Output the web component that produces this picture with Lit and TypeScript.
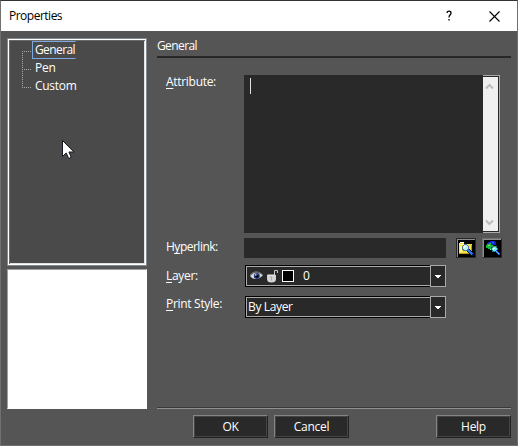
import { LitElement, html, css, svg } from "lit";
import { customElement } from "lit/decorators.js";

const folder = svg`
  <path fill="#f4e24a" d="M1 3h5v1h8v10H1z"/><path fill="#fff6a8" d="M1 4h5v1H1zM2 6h2v6H2z"/>
  <path fill="#b89a18" d="M1 13h12v1H1zM13 5h1v8h-1z"/>
  <path fill="#fff" d="M2 2h4v1H2z"/>
  <circle cx="7.5" cy="7.5" r="3" fill="#b8f4f4" stroke="#5a7890"/>
  <path fill="#fff" d="M6 6h2v1H7v1H6z"/>
  <path stroke="#08184c" stroke-width="3.4" d="M10 10l5 5"/><path stroke="#2878e8" stroke-width="1.8" d="M10 10l4.5 4.5"/>`;
const globe = svg`
  <path fill="#1028c8" d="M4 2h2V1h5v1h1v3h-2v3H6v1H4V8H3V3h1z"/>
  <path fill="#18b838" d="M3 4h2V3h2v2h2v2H7v2H4V8H2V5h1z"/>
  <path fill="#78e868" d="M4 5h2v1H4zM8 8h1v2H6V9h2z"/><path fill="#4068ff" d="M8 2h2v1H8z"/>
  <circle cx="10.5" cy="9" r="2.7" fill="#70e8e8" stroke="#287888"/>
  <path fill="#e8ffff" d="M9 8h2v1h-1v1H9z"/><path fill="#30c848" d="M10 6h2v1h-2z"/>
  <path stroke="#1058d8" stroke-width="2.4" d="M12 11l4 4"/><path stroke="#68c0ff" d="M12 11l3 3"/>`;

@customElement("app-root")
export class PropertiesDialog extends LitElement {
  static styles = css`
    :host { display: block; font: 12px/18px "Open Sans", "Noto Sans", sans-serif; color: #fff; }
    * { box-sizing: border-box; }
    svg { display: block; }
    u { text-underline-offset: 2px; text-decoration-thickness: 1px; text-decoration-skip-ink: none; }
    .window { width: 518px; height: 446px; background: #555; border: 1px solid #707070; border-top-color: #333; overflow: hidden; }
    .title { height: 30px; display: flex; align-items: center; background: #fff; color: #000; padding: 0 17px 0 8px; }
    .title span { flex: 1; letter-spacing: -.5px; }
    .title .help { margin-right: 36px; }
    .body { display: flex; gap: 10px; padding: 7px 6px 0; height: 378px; }
    .left { width: 140px; display: flex; flex-direction: column; gap: 3px; }
    .tree { height: 228px; background: #4a4a4a; border: 1px solid #808890; box-shadow: inset 0 0 0 1px #fff, inset 2px 2px 0 0 #696969, inset -2px -2px 0 0 #e3e3e3; padding: 2px; }
    .row { height: 18px; display: flex; }
    .row svg { flex: none; margin-left: 12px; }
    .row span { height: 18px; padding: 0 2px; border: 1px solid transparent; line-height: 15px; letter-spacing: -.28px; white-space: nowrap; }
    .row .active { width: 44px; border-color: #7da7e0; border-right-color: transparent; letter-spacing: -.6px; }
    .preview { height: 140px; background: #fff; border: 1px solid #fff; border-top-color: #a0a0a0; border-left-color: #a0a0a0; }
    .right { width: 354px; height: 371px; border-bottom: 1px solid #909090; box-shadow: inset 0 -1px #393939; }
    .heading { height: 20px; line-height: 15px; border-bottom: 2px solid #272727; letter-spacing: -.6px; }
    .form { display: grid; grid-template-columns: 78px 1fr; grid-template-rows: 163px 27px 31px 22px; padding: 17px 0 0 9px; }
    .form > label { letter-spacing: -.3px; white-space: nowrap; }
    .form > .attribute { line-height: 13px; }
    .form > .hyperlink { letter-spacing: -.5px; }
    .form > .layer { line-height: 22px; }
    .form > .print { line-height: 16px; }
    .memo { width: 256px; height: 158px; background: #292929; display: flex; }
    .caret { width: 1px; height: 16px; margin: 3px 0 0 6px; background: #e0e0e0; }
    .scroll { width: 17px; margin-left: auto; border: solid #aaa; border-width: 1px 1px 1px 0; padding: 1px 1px 1px 0; }
    .track { height: 154px; background: #f0f0f0; display: flex; flex-direction: column; justify-content: space-between; align-items: center; padding: 6px 2px 5px 0; }
    .link { display: flex; }
    .field { width: 202px; height: 20px; background: #292929; }
    .tool { width: 20px; height: 20px; margin-left: 10px; padding: 1px; background: #000; border: 1px solid #272727; box-shadow: inset 1px 1px #8c8c8c; }
    .tool + .tool { margin-left: 6px; border-color: #707070 #272727 #272727 #707070; }
    .combo { width: 201px; height: 22px; margin-left: 1px; display: flex; background: #000; }
    .value { width: 185px; margin: 1px 0 1px 1px; border: 1px solid #aaa; border-right: 0; background: #292929; display: flex; align-items: center; line-height: 18px; white-space: nowrap; letter-spacing: -.35px; padding-left: 1px; }
    .value.icons { padding-left: 3px; }
    .zero { margin-left: 5px; }
    .arrow { width: 16px; border: 1px solid #aaa; background: #292929; display: flex; align-items: center; justify-content: center; }
    .actions { display: flex; gap: 6px; padding: 6px 6px 0 192px; }
    .btn { width: 75px; height: 23px; background: #292929; border: 1px solid #858585; border-right-color: #222; border-bottom-color: #222; box-shadow: inset 0 0 0 1px #444; text-align: center; line-height: 21px; letter-spacing: -.3px; }
    .btn.last { margin-left: auto; }
    .pointer { position: absolute; left: 62px; top: 140px; }
  `;

  private row(name: string, index: number) {
    return html`<div class="row">
      <svg width="10" height="18" shape-rendering="crispEdges">
        <path d="M.5 ${index === 0 ? 10 : 0}V${index === 2 ? 11 : 18}M0 10.5H10" stroke="#aaa" stroke-dasharray="1 1" fill="none" />
      </svg><span class=${index === 0 ? "active" : ""}>${name}</span>
    </div>`;
  }

  private arrow() {
    return html`<div class="arrow"><svg width="6" height="3" shape-rendering="crispEdges"><path fill="#fff" d="M0 0h6v1H5v1H4v1H2V2H1V1H0z" /></svg></div>`;
  }

  render() {
    return html`<div class="window">
      <div class="title"><span>Properties</span>
        <svg class="help" width="7" height="12" fill="none" stroke="#000" stroke-width="1.3"><path d="M1 3Q1.2 1.2 3 1.2Q5 1.2 5 3Q5 4.2 4 5.1Q3 6 3 7.5M3 9V10.6" /></svg>
        <svg width="11" height="11" stroke="#000" stroke-width="1.1"><path d="M.5 .5l10 10M10.5 .5l-10 10" /></svg>
      </div>
      <div class="body">
        <div class="left">
          <div class="tree">${["General", "Pen", "Custom"].map((n, i) => this.row(n, i))}</div>
          <div class="preview"></div>
        </div>
        <div class="right">
          <div class="heading">General</div>
          <div class="form">
            <label class="attribute"><u>A</u>ttribute:</label>
            <div class="memo"><div class="caret"></div><div class="scroll"><div class="track">
              <svg width="9" height="7" fill="none" stroke="#bdbdbd" stroke-width="2"><path d="M1 5.5l3.5-3.5L8 5.5" /></svg>
              <svg width="9" height="7" fill="none" stroke="#bdbdbd" stroke-width="2"><path d="M1 1.5L4.5 5 8 1.5" /></svg>
            </div></div></div>
            <label class="hyperlink">H<u>y</u>perlink:</label>
            <div class="link"><div class="field"></div>
              <div class="tool"><svg width="16" height="16" shape-rendering="crispEdges">${folder}</svg></div>
              <div class="tool"><svg width="16" height="16" shape-rendering="crispEdges">${globe}</svg></div>
            </div>
            <label class="layer"><u>L</u>ayer:</label>
            <div class="combo"><div class="value icons">
              <svg width="48" height="16" viewBox="0 0 48 16">
                <path d="M0 8Q5 1.5 13 7Q8 13 2 10z" fill="#d8d8d8" /><path d="M0 7Q5 1 12 6" stroke="#777" fill="none" />
                <circle cx="6.8" cy="8" r="3" fill="#203878" /><circle cx="7" cy="8.3" r="1.4" fill="#000010" /><circle cx="5.8" cy="6.8" r=".9" fill="#a8c8f8" />
                <path d="M24.5 8V2.5h3V5" fill="none" stroke="#c8c8c8" />
                <path d="M17 7h9v4q0 3.5-4.5 3.5T17 11z" fill="#d4d4d4" /><path d="M17.5 7h7" stroke="#eee" /><path d="M21.5 8.5v4M20.5 9h1" stroke="#aaa" />
                <rect x="32.5" y="2.5" width="11" height="11" fill="#000" stroke="#fff" />
              </svg><span class="zero">0</span></div>${this.arrow()}</div>
            <label class="print"><u>P</u>rint Style:</label>
            <div class="combo"><div class="value">By Layer</div>${this.arrow()}</div>
          </div>
        </div>
      </div>
      <div class="actions"><div class="btn">OK</div><div class="btn">Cancel</div><div class="btn last">Help</div></div>
      <svg class="pointer" width="13" height="20"><path d="M.5 .5v16l3.7-3.5 2.5 5.5 2.6-1.2-2.4-5.3h5z" fill="#fff" stroke="#15151f" /></svg>
    </div>`;
  }
}
